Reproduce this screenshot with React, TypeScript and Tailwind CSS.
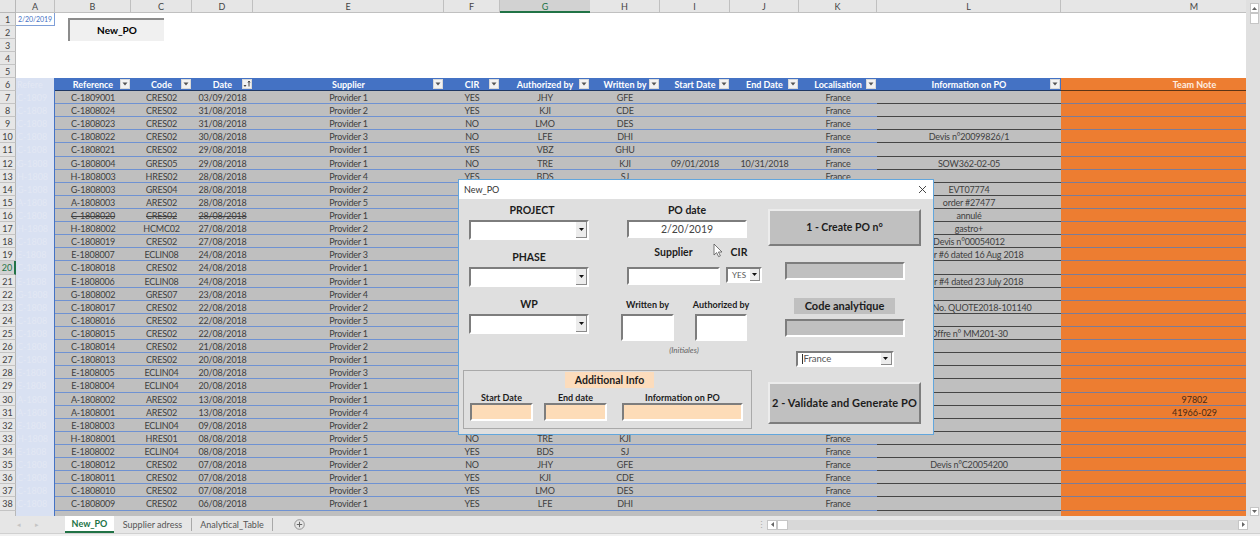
import { ReactNode } from "react";

const font = "font-['Lato','Liberation_Sans',sans-serif]";
const sunken = "border-2 border-t-[#7d7d7d] border-l-[#7d7d7d] border-r-white border-b-white";
const raised = "border-2 border-t-[#ececec] border-l-[#ececec] border-r-[#7d7d7d] border-b-[#7d7d7d]";

const columns = [
  { key: "A", width: "w-[39px]" },
  { key: "B", width: "w-[76px]" },
  { key: "C", width: "w-[61px]" },
  { key: "D", width: "w-[61px]" },
  { key: "E", width: "w-[191px]" },
  { key: "F", width: "w-[56px]" },
  { key: "G", width: "w-[90px]" },
  { key: "H", width: "w-[70px]" },
  { key: "I", width: "w-[70px]" },
  { key: "J", width: "w-[69px]" },
  { key: "K", width: "w-[78px]" },
  { key: "L", width: "w-[184px]" },
  { key: "M", width: "w-[267px]" },
];

const people = [
  ["YES", "JHY", "GFE"],
  ["YES", "KJI", "CDE"],
  ["NO", "LMO", "DES"],
  ["NO", "LFE", "DHI"],
  ["YES", "VBZ", "GHU"],
  ["NO", "TRE", "KJI"],
  ["YES", "BDS", "SJ"],
];

// ref, code, date, provider, info on PO, team note
const rows: [string, string, string, number, string?, string?][] = [
  ["C-1809001", "CRES02", "03/09/2018", 1],
  ["C-1808024", "CRES02", "31/08/2018", 2],
  ["C-1808023", "CRES02", "31/08/2018", 1],
  ["C-1808022", "CRES02", "30/08/2018", 3, "Devis n°20099826/1"],
  ["C-1808021", "CRES02", "29/08/2018", 1],
  ["G-1808004", "GRES05", "29/08/2018", 1, "SOW362-02-05"],
  ["H-1808003", "HRES02", "28/08/2018", 4],
  ["G-1808003", "GRES04", "28/08/2018", 2, "EVT07774"],
  ["A-1808003", "ARES02", "28/08/2018", 5, "order #27477"],
  ["C-1808020", "CRES02", "28/08/2018", 1, "annulé"],
  ["H-1808002", "HCMC02", "27/08/2018", 2, "gastro+"],
  ["C-1808019", "CRES02", "27/08/2018", 1, "Devis n°00054012"],
  ["E-1808007", "ECLIN08", "24/08/2018", 3, "Order #6 dated 16 Aug 2018"],
  ["C-1808018", "CRES02", "24/08/2018", 1],
  ["E-1808006", "ECLIN08", "24/08/2018", 1, "Order #4  dated 23 July 2018"],
  ["G-1808002", "GRES07", "23/08/2018", 4],
  ["C-1808017", "CRES02", "22/08/2018", 2, "Quote No. QUOTE2018-101140"],
  ["C-1808016", "CRES02", "22/08/2018", 5],
  ["C-1808015", "CRES02", "22/08/2018", 1, "Offre n° MM201-30"],
  ["C-1808014", "CRES02", "21/08/2018", 2],
  ["C-1808013", "CRES02", "20/08/2018", 1],
  ["E-1808005", "ECLIN04", "20/08/2018", 3],
  ["E-1808004", "ECLIN04", "20/08/2018", 1],
  ["A-1808002", "ARES02", "13/08/2018", 1, "", "97802"],
  ["A-1808001", "ARES02", "13/08/2018", 4, "", "41966-029"],
  ["E-1808003", "ECLIN04", "09/08/2018", 2],
  ["H-1808001", "HRES01", "08/08/2018", 5],
  ["E-1808002", "ECLIN04", "08/08/2018", 1],
  ["C-1808012", "CRES02", "07/08/2018", 2, "Devis n°C20054200"],
  ["C-1808011", "CRES02", "07/08/2018", 1],
  ["C-1808010", "CRES02", "07/08/2018", 3],
  ["C-1808009", "CRES02", "06/08/2018", 1],
];

function RowNum({ n, active }: { n?: number; active?: boolean }) {
  return (
    <div
      className={
        active
          ? "w-[16px] shrink-0 h-full bg-[#d2d2d2] border-r-2 border-[#217346] border-b border-b-[#bdbdbd] text-[#217346] text-center leading-[14px] overflow-hidden"
          : "w-[16px] shrink-0 h-full bg-[#e6e6e6] border-r border-[#b8b8b8] border-b border-b-[#c4c4c4] text-[#444] text-center leading-[14px] overflow-hidden"
      }
    >
      {n}
    </div>
  );
}

function FilterBtn({ sorted }: { sorted?: boolean }) {
  return (
    <span className="absolute right-[1px] top-[1px] w-[10px] h-[10px] bg-[#f2f2f2] border border-[#d8d8d8] flex items-center justify-center">
      {sorted ? (
        <svg width="8" height="8" viewBox="0 0 8 8">
          <path d="M0.5 5 L3.5 5 L2 7 Z" fill="#444" />
          <path d="M6 1 V6.5 M5 2.5 L6 1 L7 2.5" stroke="#444" strokeWidth="1" fill="none" />
        </svg>
      ) : (
        <svg width="6" height="4" viewBox="0 0 6 4">
          <path d="M0.5 0.5 H5.5 L3 3.5 Z" fill="#555" />
        </svg>
      )}
    </span>
  );
}

const headers = [
  ["Reference", "B"],
  ["Code", "C"],
  ["Date", "D"],
  ["Supplier", "E"],
  ["CIR", "F"],
  ["Authorized by", "G"],
  ["Written by", "H"],
  ["Start Date", "I"],
  ["End Date", "J"],
  ["Localisation", "K"],
  ["Information on PO", "L"],
];

function HeaderRow() {
  return (
    <div className="flex h-[13px] shrink-0">
      <RowNum n={6} />
      <div className="w-[39px] shrink-0 bg-[#d9e1f2] border-r border-[#4472c4] text-[#e3e8f4] pl-[1px] leading-[14px] overflow-hidden">
        Refere
      </div>
      {headers.map(([label, key]) => {
        const col = columns.find((c) => c.key === key)!;
        return (
          <div
            key={key}
            className={`${col.width} shrink-0 relative bg-[#4472c4] border-b border-[#1f3864] text-white font-bold text-center leading-[14px] overflow-hidden`}
          >
            {label}
            <FilterBtn sorted={key === "D"} />
          </div>
        );
      })}
      <div className="w-[267px] shrink-0 bg-[#ed7d31] border-b border-[#5c3416] text-[#fdeee2] font-bold text-center leading-[14px] overflow-hidden">
        Team Note
      </div>
    </div>
  );
}

function DataRow({ n, row, index }: { n: number; row: (typeof rows)[number]; index: number }) {
  const [ref, code, date, provider, info, note] = row;
  let [cir, auth, written] = people[index % 7];
  if (n === 35) cir = "NO";
  if (n === 37 || n === 38) cir = "YES";
  const struck = n === 16 ? "line-through" : "";
  const cell = "shrink-0 h-full bg-[#bfbfbf] border-b border-[#6f92d2] text-center leading-[14px] tracking-[-0.2px] text-[#404040] overflow-hidden whitespace-nowrap";
  return (
    <div className="flex h-[13.12px] shrink-0">
      <RowNum n={n} active={n === 20} />
      <div className="w-[39px] shrink-0 h-full bg-[#d9e1f2] border-r border-[#4472c4] text-[#e3e8f4] pl-[1px] leading-[14px] overflow-hidden">
        {ref.slice(0, 6)}
      </div>
      <div className={`w-[76px] ${cell} ${struck}`}>{ref}</div>
      <div className={`w-[61px] ${cell} ${struck}`}>{code}</div>
      <div className={`w-[61px] ${cell} ${struck}`}>{date}</div>
      <div className={`w-[191px] ${cell}`}>Provider {provider}</div>
      <div className={`w-[56px] ${cell}`}>{cir}</div>
      <div className={`w-[90px] ${cell}`}>{auth}</div>
      <div className={`w-[70px] ${cell}`}>{written}</div>
      <div className={`w-[70px] ${cell}`}>{n === 12 ? "09/01/2018" : ""}</div>
      <div className={`w-[69px] ${cell}`}>{n === 12 ? "10/31/2018" : ""}</div>
      <div className={`w-[78px] ${cell}`}>France</div>
      <div className="w-[184px] shrink-0 h-full bg-[#bfbfbf] border-b border-[#454545] text-center leading-[14px] tracking-[-0.2px] text-[#404040] overflow-hidden whitespace-nowrap">
        {info}
      </div>
      <div className="w-[267px] shrink-0 h-full bg-[#ed7d31] border-b border-[#7c7c98] text-center leading-[14px] text-[#4a2a12] overflow-hidden">
        {note}
      </div>
    </div>
  );
}

// row 39 is only a sliver above the tab bar
function LastRow() {
  return (
    <div className="flex h-[13.12px] shrink-0">
      <RowNum />
      <div className="w-[39px] shrink-0 h-full bg-[#d9e1f2] border-r border-[#4472c4]" />
      <div className="w-[1006px] shrink-0 h-full bg-[#bfbfbf]" />
      <div className="w-[267px] shrink-0 h-full bg-[#ed7d31]" />
    </div>
  );
}

function Combo({ className, arrow = "w-[11px]", children }: { className: string; arrow?: string; children?: ReactNode }) {
  return (
    <div className={`${className} ${sunken} bg-white flex items-stretch`}>
      <div className="flex-1 min-w-0 overflow-hidden text-[#555] leading-[13px]">{children}</div>
      <div className={`${arrow} bg-[#ececec] border-r border-b border-[#8a8a8a] flex items-center justify-center`}>
        <svg width="5" height="3" viewBox="0 0 5 3">
          <path d="M0 0 H5 L2.5 3 Z" fill="#111" />
        </svg>
      </div>
    </div>
  );
}

function Label({ className = "", children }: { className?: string; children: ReactNode }) {
  return <div className={`font-bold text-[#1c1c1c] text-center ${className}`}>{children}</div>;
}

function Dialog() {
  return (
    <div className="absolute left-[458px] top-[179px] w-[476px] h-[256px] border border-[#62a6dc] text-[10.5px]">
      <div className="h-[19px] bg-white flex items-center justify-between pl-[5px] pr-[5px] text-[9px] text-[#333]">
        <span>New_PO</span>
        <svg width="9" height="9" viewBox="0 0 9 9" className="mr-[1px]">
          <path d="M1 1 L8 8 M8 1 L1 8" stroke="#333" strokeWidth="0.9" />
        </svg>
      </div>
      <div className="h-[235px] bg-[#dfdfdf] flex pl-[4px]">
        <div className="w-[289px] shrink-0">
          <div className="h-[171px] flex pl-[6px] pt-[4px]">
            <div className="w-[120px] shrink-0">
              <Label className="h-[15px] leading-[15px] mb-[2px] pl-[6px]">PROJECT</Label>
              <Combo className="h-[20px]" />
              <Label className="h-[15px] leading-[15px] mt-[10px] mb-[2px]">PHASE</Label>
              <Combo className="h-[20px]" />
              <Label className="h-[15px] leading-[15px] mt-[10px] mb-[2px]">WP</Label>
              <Combo className="h-[20px]" />
            </div>
            <div className="ml-[32px] w-[141px] shrink-0">
              <div className="pl-[6px]">
                <Label className="w-[120px] h-[15px] leading-[15px] mb-[2px]">PO date</Label>
                <div className={`w-[120px] h-[18px] ${sunken} bg-white text-center text-[#444] leading-[14px]`}>2/20/2019</div>
                <div className="flex gap-[6px] mt-[7px]">
                  <div className="w-[93px]">
                    <Label className="h-[15px] leading-[15px] mb-[7px]">Supplier</Label>
                    <div className={`h-[18px] ${sunken} bg-white`} />
                  </div>
                  <div className="w-[36px]">
                    <Label className="h-[15px] leading-[15px] mb-[7px] pr-[10px]">CIR</Label>
                    <Combo className="h-[16px]" arrow="w-[10px]">
                      <div className="text-center text-[8px]">YES</div>
                    </Combo>
                  </div>
                </div>
              </div>
              <div className="flex gap-[21px] mt-[12px] text-[9px]">
                <div className="w-[53px]">
                  <Label className="h-[15px] leading-[15px] mb-[2px] whitespace-nowrap">Written by</Label>
                  <div className={`h-[27px] ${sunken} bg-white`} />
                </div>
                <div className="w-[52px]">
                  <Label className="h-[15px] leading-[15px] mb-[2px] whitespace-nowrap -mx-[6px]">Authorized by</Label>
                  <div className={`h-[27px] ${sunken} bg-white`} />
                </div>
              </div>
              <div className="w-[126px] mt-[3px] text-center italic text-[8px] text-[#666] leading-[13px]">(Initiales)</div>
            </div>
          </div>
          <div className="h-[59px] border border-[#a9a9a9] pt-[1px]">
            <div className="ml-[101px] w-[89px] h-[16px] bg-[#fcdcbc] text-center font-bold text-[#1c1c1c] leading-[16px]">Additional Info</div>
            <div className="flex pl-[6px] mt-[3px] text-[9px]">
              <div className="w-[63px]">
                <Label className="h-[12px] leading-[14px]">Start Date</Label>
                <div className={`h-[18px] ${sunken} bg-[#fddcb8]`} />
              </div>
              <div className="w-[63px] ml-[11px]">
                <Label className="h-[12px] leading-[14px]">End date</Label>
                <div className={`h-[18px] ${sunken} bg-[#fddcb8]`} />
              </div>
              <div className="w-[121px] ml-[15px]">
                <Label className="h-[12px] leading-[14px]">Information on PO</Label>
                <div className={`h-[18px] ${sunken} bg-[#fddcb8]`} />
              </div>
            </div>
          </div>
        </div>
        <div className="ml-[16px] w-[153px] pt-[10px] flex flex-col items-center">
          <div className={`w-full h-[37px] ${raised} bg-[#c0c0c0] flex items-center justify-center font-bold text-[#1c1c1c]`}>1 - Create PO n°</div>
          <div className={`w-[120px] h-[18px] mt-[16px] ${sunken} bg-[#c0c0c0]`} />
          <div className="w-[101px] h-[16px] mt-[18px] bg-[#c0c0c0] text-center font-bold text-[11px] text-[#1c1c1c] leading-[16px]">Code analytique</div>
          <div className={`w-[120px] h-[18px] mt-[5px] ${sunken} bg-[#c0c0c0]`} />
          <Combo className="w-[98px] h-[16px] mt-[14px]">
            <div className="pl-[1px] border-l border-[#333] h-[10px] mt-[1px] ml-[4px] leading-[10px] text-[9.5px]">France</div>
          </Combo>
          <div className={`w-full h-[42px] mt-[15px] ${raised} bg-[#c0c0c0] flex items-center justify-center font-bold text-[11px] tracking-[0.1px] whitespace-nowrap text-[#1c1c1c]`}>2 - Validate and Generate PO</div>
        </div>
      </div>
      {/* mouse pointer */}
      <svg width="11" height="15" viewBox="0 0 11 15" className="absolute left-[254px] top-[63px]">
        <path d="M1 1 V12 L3.6 9.6 L5.6 13.6 L7.4 12.8 L5.4 9 H9 Z" fill="#fff" stroke="#555" strokeWidth="0.8" />
      </svg>
    </div>
  );
}

export default function App() {
  return (
    <div className={`${font} w-[1260px] h-[536px] overflow-hidden bg-[#e6e6e6] text-[9px] flex flex-col`}>
      <div className="flex h-[516px] shrink-0">
        <div className="w-[1246px] shrink-0 h-full overflow-hidden flex flex-col relative">
          {/* column letters */}
          <div className="flex h-[13px] shrink-0 text-[#444]">
            <div className="w-[16px] shrink-0 bg-[#e6e6e6] border-r border-b border-[#b8b8b8]" />
            {columns.map((c) => (
              <div
                key={c.key}
                className={
                  c.key === "G"
                    ? `${c.width} shrink-0 bg-[#d2d2d2] border-b-2 border-[#217346] text-[#217346] text-center leading-[14px] overflow-hidden`
                    : `${c.width} shrink-0 bg-[#e6e6e6] border-r border-b border-[#c0c0c0] text-center leading-[14px] overflow-hidden`
                }
              >
                {c.key}
              </div>
            ))}
          </div>
          {/* empty rows above the table */}
          {[1, 2, 3, 4, 5].map((n) => (
            <div key={n} className="flex h-[13px] shrink-0 bg-white">
              <RowNum n={n} />
              {n === 1 && (
                <div className="w-[39px] h-full border-r border-b border-[#7f9fd8] text-[#4472c4] text-[7px] tracking-[-0.1px] leading-[13px] pl-[2px] whitespace-nowrap overflow-hidden">2/20/2019</div>
              )}
            </div>
          ))}
          <HeaderRow />
          {rows.map((row, i) => (
            <DataRow key={i} n={i + 7} row={row} index={i} />
          ))}
          <LastRow />
          {/* macro button sitting on the sheet */}
          <div className="absolute left-[68px] top-[18px] w-[96px] h-[23px] bg-[#f0f0f0] border-t-2 border-l-2 border-[#8c8c8c] text-center font-bold text-[10px] text-black leading-[20px]">
            New_PO
          </div>
          <Dialog />
        </div>
        {/* vertical scrollbar */}
        <div className="w-[14px] shrink-0 h-full bg-[#e0e0e0] flex flex-col items-center pl-[3px]">
          <div className="mt-[3px] w-[9px] h-[10px] bg-white border border-[#c6c6c6] flex items-center justify-center">
            <svg width="5" height="3" viewBox="0 0 5 3"><path d="M0 3 H5 L2.5 0 Z" fill="#666" /></svg>
          </div>
          <div className="w-[9px] h-[11px] bg-white border border-[#c6c6c6]" />
          <div className="mt-auto w-[9px] h-[9px] bg-white border border-[#c6c6c6] flex items-center justify-center">
            <svg width="5" height="3" viewBox="0 0 5 3"><path d="M0 0 H5 L2.5 3 Z" fill="#666" /></svg>
          </div>
        </div>
      </div>
      {/* sheet tabs */}
      <div className="h-[17px] shrink-0 bg-[#e6e6e6] flex items-center text-[9px] text-[#555]">
        <div className="w-[65px] shrink-0 flex gap-[14px] pl-[17px] text-[#c4c4c4] text-[7px]">
          <span>◂</span>
          <span>▸</span>
        </div>
        <div className="w-[49px] h-full shrink-0 bg-white border-b-2 border-[#217346] text-[#217346] font-bold text-center leading-[16px]">New_PO</div>
        <div className="w-[78px] shrink-0 text-center border-r border-[#a8a8a8]">Supplier adress</div>
        <div className="w-[81px] shrink-0 text-center border-r border-[#a8a8a8]">Analytical_Table</div>
        <div className="w-[32px] shrink-0 flex justify-end">
          <svg width="11" height="11" viewBox="0 0 11 11">
            <circle cx="5.5" cy="5.5" r="4.8" fill="none" stroke="#8a8a8a" strokeWidth="0.9" />
            <path d="M5.5 2.8 V8.2 M2.8 5.5 H8.2" stroke="#666" strokeWidth="1" />
          </svg>
        </div>
        <div className="ml-[451px] w-[11px] shrink-0 text-center text-[#aaa] leading-[8px]">⋮</div>
        <div className="w-[10px] h-[10px] shrink-0 bg-white border border-[#c6c6c6] flex items-center justify-center">
          <svg width="3" height="5" viewBox="0 0 3 5"><path d="M3 0 V5 L0 2.5 Z" fill="#666" /></svg>
        </div>
        <div className="w-[461px] h-[10px] shrink-0 bg-[#d8d8d8]">
          <div className="w-[11px] h-full bg-white border border-[#c6c6c6]" />
        </div>
        <div className="w-[10px] h-[10px] shrink-0 bg-white border border-[#c6c6c6] flex items-center justify-center">
          <svg width="3" height="5" viewBox="0 0 3 5"><path d="M0 0 V5 L3 2.5 Z" fill="#666" /></svg>
        </div>
      </div>
      <div className="flex-1 bg-[#f1f1f1] border-t border-[#d0d0d0]" />
    </div>
  );
}
